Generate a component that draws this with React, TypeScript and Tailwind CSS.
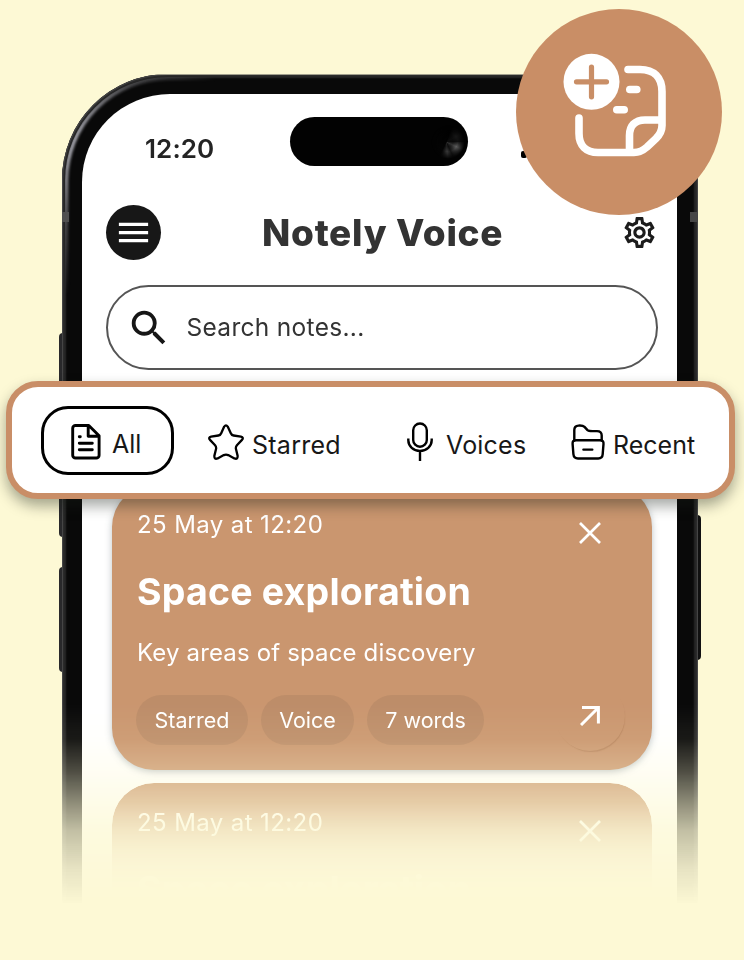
import React from 'react';
import { MdMenu, MdOutlineSettings, MdSearch } from 'react-icons/md';

const CloseIcon = () => (
  <svg className="size-[22px]" viewBox="0 0 22 22" fill="none" stroke="white" strokeWidth="2.7">
    <path d="M1 1 21 21M21 1 1 21" />
  </svg>
);

const ArrowIcon = () => (
  <svg className="size-[20px]" viewBox="0 0 20 20" fill="none" stroke="white" strokeWidth="3">
    <path d="M1 19 18 2M2 1.600H18.400V17.500" />
  </svg>
);

const FileIcon = () => (
  <svg className="h-[36px] w-[30px]" viewBox="0 0 30 36" fill="none" stroke="black" strokeWidth="2.9" strokeLinecap="round" strokeLinejoin="round">
    <path d="M17.800 1.500H4.500A2.800 2.800 0 0 0 1.700 4.300V31.200a2.800 2.800 0 0 0 2.800 2.800H25.300a2.800 2.800 0 0 0 2.800-2.800V11.800ZM17.200 1.500V12.300H28.100" />
    <path d="M8.300 12.700h1M8.300 19.300h13M8.300 25.800h13" />
  </svg>
);

const StarIcon = () => (
  <svg className="size-[36px]" viewBox="0 0 36 36" fill="none" stroke="black" strokeWidth="2.3" strokeLinejoin="round">
    <path d="M16.2 2.6Q18 .2 19.7 2.6L22.8 9.2Q23.6 11.2 25.6 11.5L32.9 12.6Q36 13.4 34 15.9L28.9 21.3Q27.6 22.8 27.9 24.8L29.6 31.6Q30 35.8 26.4 34.4L20.2 31.1Q18 30 15.8 31.1L9.6 34.4Q6 35.8 6.4 31.6L8.1 24.8Q8.4 22.8 7.1 21.3L2 15.9Q0 13.4 3.1 12.6L10.4 11.5Q12.4 11.2 13.2 9.2Z" />
  </svg>
);

const MicIcon = () => (
  <svg className="h-[40px] w-[26px]" viewBox="0 0 26 40" fill="none" stroke="black" strokeWidth="2.4">
    <rect x="6.2" y="1.5" width="13.6" height="23.2" rx="6.8" />
    <path d="M1.3 16.5v1.8a11.7 10.6 0 0 0 23.4 0v-1.8M13 29v10" />
  </svg>
);

const FolderIcon = () => (
  <svg className="h-[36px] w-[34px]" viewBox="0 0 34 36" fill="none" stroke="black" strokeWidth="2.4" strokeLinecap="round" strokeLinejoin="round">
    <path d="M3.3 16.5V6.1C3.3 3 4.6 1.8 7.5 1.6c3-.2 4.600-.1 6 1.300l3 3.200c1 1 2 1 5 1h4.500c3.300 0 4.700 1.500 4.700 4.500v4.900" />
    <path d="M5 16.2H29.300c2.500 0 3.400 1.300 3.200 3.700l-.8 10.300c-.2 3.200-1.500 4.300-4.500 4.300H7c-3 0-4.300-1.100-4.600-4.300l-.8-10.300c-.2-2.400.8-3.700 3.400-3.700ZM12.400 25.600H21.300" />
  </svg>
);

const NoteAddIcon = () => (
  <svg className="size-full" viewBox="516 8.500 206 206" fill="none" stroke="white" strokeWidth="7.6" strokeLinecap="round" strokeLinejoin="round">
    <path d="M628 69H640C654 69 662 77 662 91V125C662 130 660 134 656 138L647 146.500C643 150 639 152 634 152H598C586 152 579 145 579 133V117.500" />
    <path d="M661 119.500H645C635 119.500 629.500 125 629.500 135V151M629.800 89H636.800M616.800 109.300H624.200" />
    <circle cx="591.500" cy="81.300" r="28" fill="white" stroke="none" />
    <path d="M591.500 66.500V96.300M576.500 81.300H606.500" stroke="#c98e66" strokeWidth="5.200" />
  </svg>
);

const Chip = ({ label, width }: { label: string; width: string }) => (
  <span className={`flex h-[50px] items-center justify-center rounded-full bg-[#bd8d69] text-[21.5px] tracking-[0px] ${width}`}>{label}</span>
);

const NoteCard = ({ preview = false }: { preview?: boolean }) => (
  <article
    className={`flex shrink-0 flex-col rounded-[42px] bg-[#ca966f] pl-[25px] pr-[26px] text-white ${
      preview
        ? 'h-[160px] [mask-image:linear-gradient(to_bottom,black_20px,rgba(0,0,0,0.8)_45px,rgba(0,0,0,0.35)_80px,rgba(0,0,0,0.1)_105px,transparent_130px)]'
        : 'h-[285px] shadow-[0_2px_7px_rgba(60,80,90,0.35)]'
    }`}
  >
    <div className="flex justify-between pt-[25px]">
      <p className="text-[24px] leading-[30px] tracking-[0.4px] whitespace-nowrap">25 May at 12:20</p>
      <span className="mr-[25px] mt-[12px]"><CloseIcon /></span>
    </div>
    <h2 className="mt-[26px] text-[37.5px] font-bold leading-[44px] tracking-[0.2px] whitespace-nowrap">Space exploration</h2>
    {!preview && (
      <>
        <p className="mt-[24px] text-[24px] leading-[30px] tracking-[0.15px] whitespace-nowrap">Key areas of space discovery</p>
        <div className="-ml-px mt-[27px] flex h-[50px] items-center gap-[13px]">
          <Chip label="Starred" width="w-[112px]" />
          <Chip label="Voice" width="w-[93px]" />
          <Chip label="7 words" width="w-[117px]" />
          <span className="-mt-[8px] ml-auto mr-px flex size-[70px] items-center justify-center rounded-full shadow-[1px_2px_1px_-1px_rgba(130,80,45,0.25)]">
            <ArrowIcon />
          </span>
        </div>
      </>
    )}
  </article>
);

const Phone = () => (
  <div className="relative ml-[62px] h-[886px] w-[636px] [mask-image:linear-gradient(to_bottom,black_630px,rgba(0,0,0,0.93)_665px,rgba(0,0,0,0.72)_696px,rgba(0,0,0,0.47)_726px,rgba(0,0,0,0.24)_756px,rgba(0,0,0,0.1)_790px,transparent_830px)] [mask-clip:no-clip]">
    <i className="absolute -left-[3px] top-[259px] h-[204px] w-[5px] rounded-l-sm bg-[#29292b]" />
    <i className="absolute -left-[3px] top-[493px] h-[105px] w-[5px] rounded-l-sm bg-[#29292b]" />
    <i className="absolute -right-[3px] top-[441px] h-[145px] w-[5px] rounded-r-sm bg-[#111]" />
    <div className="relative h-full rounded-t-[106px] bg-[#090909] pl-[20px] pr-[21px] pt-[20px] shadow-[inset_0_0_1px_1px_#494949,inset_0_0_2px_4px_#292929]">
      <i className="absolute inset-[3px] rounded-t-[103px] border-[3px] border-[#c5c5ce] blur-[1.5px] [mask-image:radial-gradient(circle_at_18px_70px,black_15px,rgba(0,0,0,0.35)_80px,transparent_150px)]" />
      <i className="absolute left-0 top-[138px] h-[10px] w-[7px] bg-[#505050]" />
      <i className="absolute right-[1px] top-[138px] h-[10px] w-[7px] bg-[#464646]" />
      <div className="relative flex h-full flex-col overflow-hidden rounded-t-[88px] bg-white pl-[24px] pr-[19px]">
        <div className="flex h-[111px] shrink-0 items-start">
          <time className="ml-[39px] mt-[39px] w-[145px] text-[26px] font-semibold leading-[32px] tracking-[0.1px] text-[#242424]">12:20</time>
          <div className="mt-[23px] flex h-[49px] w-[178px] items-center justify-end rounded-full bg-[#020202] pr-[3px]">
            <i className="size-[34px] rounded-full bg-[conic-gradient(from_90deg_at_45%_50%,#222,#777_25deg,#444_45deg,#1c1c1c_65deg,#484848_85deg,#050505_115deg,#000_290deg,#1c1c1c_330deg,#111)] opacity-80 blur-[0.5px] [mask-image:radial-gradient(circle,rgba(0,0,0,0.5)_20%,black_40%,transparent_70%)]" />
          </div>
          <i className="ml-[53px] mt-[57px] h-[7px] w-[6px] rounded-[2px] bg-black" />
        </div>
        <header className="flex h-[55px] shrink-0 items-center">
          <span className="flex size-[55px] items-center justify-center rounded-full bg-[#171717] text-white"><MdMenu className="size-[39px]" /></span>
          <h1 className="ml-[101px] text-[37px] font-extrabold leading-[44px] tracking-[0.7px] text-[#333] whitespace-nowrap">Notely Voice</h1>
          <MdOutlineSettings className="ml-auto size-[37px] text-[#1c1c1c]" />
        </header>
        <div className="mt-[25px] flex h-[85px] shrink-0 items-center rounded-full border-[2px] border-[#555] pl-[18px] text-[#333]">
          <MdSearch className="size-[46px] text-[#161616]" />
          <span className="ml-[14.5px] text-[24.5px] tracking-[0.3px]">Search notes...</span>
        </div>
        <div className="mx-[6px] mt-[115px] flex flex-col gap-[13px]">
          <NoteCard />
          <NoteCard preview />
        </div>
      </div>
    </div>
  </div>
);

const FilterBar = () => (
  <nav className="absolute left-[6px] top-[381px] flex h-[118px] w-[729px] items-center rounded-[32px] border-[6px] border-[#c98e67] bg-white pl-[29px] text-[25px] text-[#171717] shadow-[0_7px_14px_rgba(20,30,20,0.38)]">
    <span className="flex h-[69px] w-[133px] items-center rounded-[27px] border-[3px] border-black pl-[27px] pt-[3px]">
      <FileIcon /><span className="ml-[11px] mt-[7px]">All</span>
    </span>
    <span className="ml-[34px] mt-[3px] flex w-[199px] items-center"><StarIcon /><span className="ml-[8px] mt-[8px] tracking-[0.25px]">Starred</span></span>
    <span className="mt-[3px] flex w-[164px] items-center"><MicIcon /><span className="ml-[13px] mt-[8px] tracking-[0.2px]">Voices</span></span>
    <span className="mt-[3px] flex items-center"><FolderIcon /><span className="ml-[8px] mt-[8px]">Recent</span></span>
  </nav>
);

export default function App() {
  return (
    <main className="relative h-[960px] w-[744px] overflow-hidden bg-[#fdf9d5] pt-[74px] font-['Inter',sans-serif]">
      <Phone />
      <FilterBar />
      <div className="absolute left-[516px] top-[8.5px] size-[206px] rounded-full bg-[#c98e66]"><NoteAddIcon /></div>
    </main>
  );
}
